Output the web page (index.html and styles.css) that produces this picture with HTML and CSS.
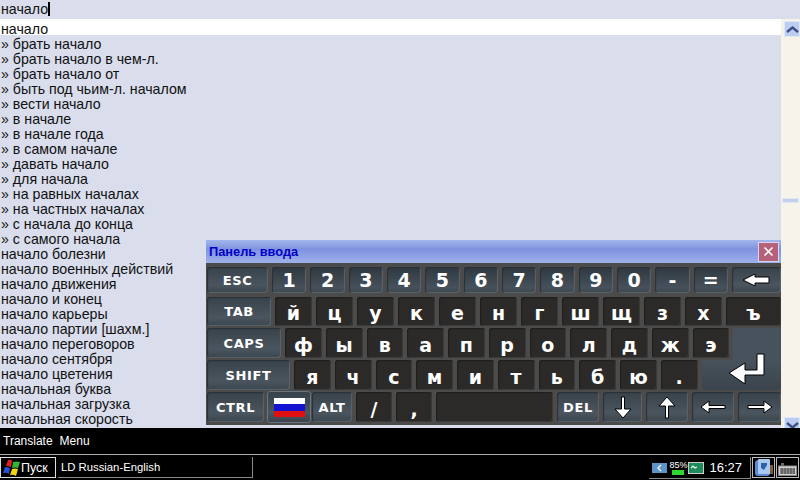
FILE: index.html
```html
<!DOCTYPE html>
<html lang="ru">

<head>
  <meta charset="UTF-8">
  <title>LD Russian-English</title>
  <link rel="stylesheet" href="styles.css">
</head>

<body>
  <div class="screen">
    <div class="search">начало<span class="caret"></span></div>

    <div class="results">
      <ul class="list">
        <li class="selected">начало</li>
        <li>» брать начало</li>
        <li>» брать начало в чем-л.</li>
        <li>» брать начало от</li>
        <li>» быть под чьим-л. началом</li>
        <li>» вести начало</li>
        <li>» в начале</li>
        <li>» в начале года</li>
        <li>» в самом начале</li>
        <li>» давать начало</li>
        <li>» для начала</li>
        <li>» на равных началах</li>
        <li>» на частных началах</li>
        <li>» с начала до конца</li>
        <li>» с самого начала</li>
        <li>начало болезни</li>
        <li>начало военных действий</li>
        <li>начало движения</li>
        <li>начало и конец</li>
        <li>начало карьеры</li>
        <li>начало партии [шахм.]</li>
        <li>начало переговоров</li>
        <li>начало сентября</li>
        <li>начало цветения</li>
        <li>начальная буква</li>
        <li>начальная загрузка</li>
        <li>начальная скорость</li>
      </ul>
      <div class="scrollbar">
        <div class="sb-btn sb-up">
          <svg width="13" height="7" viewBox="0 0 13 7"><path d="M1 6 L6.5 1.5 L12 6" fill="none" stroke="#3d4f86" stroke-width="2.4"/></svg>
        </div>
        <div class="sb-track"></div>
        <div class="sb-thumb"></div>
        <div class="sb-btn sb-down">
          <svg width="13" height="7" viewBox="0 0 13 7"><path d="M1 1 L6.5 5.5 L12 1" fill="none" stroke="#3d4f86" stroke-width="2.4"/></svg>
        </div>
      </div>
    </div>

    <div class="menubar">
      <span>Translate</span>
      <span>Menu</span>
    </div>

    <div class="taskbar">
      <div class="start">
        <svg width="19" height="18" viewBox="0 0 19 18">
          <path d="M6 1 Q9 0 10 2 L9 8 Q6 7 4 7 Z" fill="#e02020"/>
          <path d="M11 3 Q15 2 18 3 L16 9 Q13 8 10 9 Z" fill="#2fb52f"/>
          <path d="M3 8 Q6 8 8 9 L7 15 Q4 13 1 14 Z" fill="#2a4fd8"/>
          <path d="M10 10 Q13 9 16 10 L14 17 Q11 15 8 16 Z" fill="#f2d417"/>
        </svg>
        <span>Пуск</span>
      </div>
      <div class="task">LD Russian-English</div>
      <div class="tray">
        <span class="tray-net">
          <svg width="15" height="10" viewBox="0 0 15 10"><path d="M9 2 L6 5 L9 8" fill="none" stroke="#e6f0f8" stroke-width="1.5"/></svg>
        </span>
        <span class="tray-batt">
          <span class="batt-text">85%</span>
          <span class="batt-bar"></span>
        </span>
        <span class="tray-sig">
          <svg width="14" height="10" viewBox="0 0 14 10"><path d="M2 5 L4 3 L6 5 L8 4" fill="none" stroke="#e8fff0" stroke-width="1.2"/></svg>
        </span>
        <span class="clock">16:27</span>
      </div>
      <div class="quick">
        <svg width="20" height="20" viewBox="0 0 20 20">
          <rect x="1" y="2" width="15" height="16" rx="3" fill="#5a8ad6"/>
          <rect x="4" y="1" width="12" height="15" rx="1" fill="#a9c8f0"/>
          <path d="M7 5 L13 5 L13 7 L10 12 L7 10 Z" fill="#2f5fa8"/>
          <rect x="16" y="7" width="3" height="9" fill="#7d5b35"/>
        </svg>
      </div>
      <div class="quick quick-kb">
        <svg width="19" height="13" viewBox="0 0 19 13">
          <rect x="0.5" y="3" width="18" height="9.5" fill="#cfcfcf" stroke="#8a8a8a"/>
          <path d="M2 6 H17 M2 8 H17 M2 10 H17 M4 5 V11 M7 5 V11 M10 5 V11 M13 5 V11 M16 5 V11" stroke="#444" stroke-width="1"/>
          <rect x="3" y="0" width="3" height="3" fill="#666"/>
        </svg>
      </div>
    </div>

    <section class="kbd">
      <header class="kbd-title">
        <span>Панель ввода</span>
        <button class="kbd-close">
          <svg width="11" height="11" viewBox="0 0 11 11"><path d="M1.5 1.5 L9.5 9.5 M9.5 1.5 L1.5 9.5" stroke="#fff" stroke-width="1.6"/></svg>
        </button>
      </header>

      <div class="kbd-body">
        <div class="row r1">
          <div class="key fn w-esc">ESC</div>
          <div class="key fn num w-1">1</div>
          <div class="key fn num w-1">2</div>
          <div class="key fn num w-1">3</div>
          <div class="key fn num w-1">4</div>
          <div class="key fn num w-1">5</div>
          <div class="key fn num w-1">6</div>
          <div class="key fn num w-1">7</div>
          <div class="key fn num w-1">8</div>
          <div class="key fn num w-1">9</div>
          <div class="key fn num w-1">0</div>
          <div class="key fn num w-1">-</div>
          <div class="key fn num w-1">=</div>
          <div class="key fn grow">
            <svg width="28" height="14" viewBox="0 0 28 14"><path d="M1 7 L13 1 V4 H27 V10 H13 V13 Z" fill="#fff" stroke="#000" stroke-width="1"/></svg>
          </div>
        </div>

        <div class="row r2">
          <div class="key fn w-tab">TAB</div>
          <div class="key ltr">й</div>
          <div class="key ltr">ц</div>
          <div class="key ltr">у</div>
          <div class="key ltr">к</div>
          <div class="key ltr">е</div>
          <div class="key ltr">н</div>
          <div class="key ltr">г</div>
          <div class="key ltr">ш</div>
          <div class="key ltr">щ</div>
          <div class="key ltr">з</div>
          <div class="key ltr">х</div>
          <div class="key ltr grow">ъ</div>
        </div>

        <div class="row r3">
          <div class="key fn w-caps">CAPS</div>
          <div class="key ltr w-2">ф</div>
          <div class="key ltr w-2">ы</div>
          <div class="key ltr w-2">в</div>
          <div class="key ltr w-2">а</div>
          <div class="key ltr w-2">п</div>
          <div class="key ltr w-2">р</div>
          <div class="key ltr w-2">о</div>
          <div class="key ltr w-2">л</div>
          <div class="key ltr w-2">д</div>
          <div class="key ltr w-2">ж</div>
          <div class="key ltr w-2">э</div>
          <div class="key fn grow enter-top"></div>
        </div>

        <div class="row r4">
          <div class="key fn w-shift">SHIFT</div>
          <div class="key ltr w-2">я</div>
          <div class="key ltr w-2">ч</div>
          <div class="key ltr w-2">с</div>
          <div class="key ltr w-2">м</div>
          <div class="key ltr w-2">и</div>
          <div class="key ltr w-2">т</div>
          <div class="key ltr w-2">ь</div>
          <div class="key ltr w-2">б</div>
          <div class="key ltr w-2">ю</div>
          <div class="key ltr w-2">.</div>
          <div class="key fn grow enter-bot">
            <svg class="enter-icon" width="38" height="33" viewBox="0 0 38 33"><path d="M1 20 L17 10 V17 H29 V1 H36 V22 H17 V31 Z" fill="#fff" stroke="#000" stroke-width="1"/></svg>
          </div>
        </div>

        <div class="row r5">
          <div class="key fn w-ctrl">CTRL</div>
          <div class="key fn w-flag">
            <span class="flag"></span>
          </div>
          <div class="key fn w-alt">ALT</div>
          <div class="key ltr w-sym">/</div>
          <div class="key ltr w-sym">,</div>
          <div class="key ltr w-space"></div>
          <div class="key fn w-del">DEL</div>
          <div class="key fn w-arr">
            <svg width="20" height="23" viewBox="0 0 20 23"><path d="M8.5 1 H11.5 V13 H18 L10 22 L2 13 H8.5 Z" fill="#fff" stroke="#000"/></svg>
          </div>
          <div class="key fn w-arr2">
            <svg width="20" height="23" viewBox="0 0 20 23"><path d="M8.5 22 H11.5 V10 H18 L10 1 L2 10 H8.5 Z" fill="#fff" stroke="#000"/></svg>
          </div>
          <div class="key fn w-arr2">
            <svg width="26" height="14" viewBox="0 0 26 14"><path d="M1 7 L9 1 V5.5 H25 V8.5 H9 V13 Z" fill="#fff" stroke="#000"/></svg>
          </div>
          <div class="key fn grow">
            <svg width="26" height="14" viewBox="0 0 26 14"><path d="M25 7 L17 1 V5.5 H1 V8.5 H17 V13 Z" fill="#fff" stroke="#000"/></svg>
          </div>
        </div>
      </div>
    </section>
  </div>
</body>

</html>
```

FILE: styles.css
```css
* {
  box-sizing: border-box;
  margin: 0;
  padding: 0;
}

html,
body {
  width: 800px;
  height: 480px;
  overflow: hidden;
  background: #000;
}

.screen {
  position: relative;
  width: 800px;
  height: 480px;
  display: flex;
  flex-direction: column;
  font-family: "Liberation Sans", Arial, sans-serif;
  font-size: 14.2px;
  color: #111;
  background: #d9ddec;
}

/* search field */
.search {
  height: 19px;
  padding: 1px 0 0 1px;
  line-height: 16px;
  display: flex;
  align-items: flex-start;
  background: #d9ddec;
}

.caret {
  width: 2px;
  height: 14px;
  margin-top: 1px;
  background: #000;
}

/* word list */
.results {
  height: 409px;
  display: flex;
  overflow: hidden;
}

.list {
  flex: 1;
  list-style: none;
  overflow: hidden;
}

.list li {
  height: 15px;
  line-height: 15px;
  padding-left: 1px;
  white-space: nowrap;
}

.list li.selected {
  height: 16px;
  margin-bottom: 2px;
  line-height: 20px;
  background: #fff;
}

.scrollbar {
  position: relative;
  width: 19px;
  display: flex;
  flex-direction: column;
  background: #f5f3ea;
}

.sb-btn {
  flex: 0 0 16px;
  margin-left: 3px;
  display: flex;
  align-items: center;
  justify-content: center;
  background: #bccdf2;
  border: 1px solid #dfe7f8;
}

.sb-up {
  margin-top: 2px;
}

.sb-down {
  margin-bottom: -5px;
}

.sb-track {
  flex: 1;
}

.sb-thumb {
  position: absolute;
  top: 179px;
  left: 1px;
  width: 17px;
  height: 5px;
  background: #c3cfee;
  border: 1px solid #e2e6f3;
}

/* bottom bars */
.menubar {
  height: 27px;
  display: flex;
  gap: 7px;
  align-items: center;
  padding-left: 3px;
  color: #fff;
  font-size: 12px;
  background: #000;
  border-bottom: 1px solid #aaa;
}

.taskbar {
  height: 25px;
  display: flex;
  align-items: flex-start;
  padding-top: 2px;
  color: #fff;
  background: #000;
}

.start {
  width: 56px;
  height: 21px;
  display: flex;
  align-items: center;
  padding-left: 1px;
  font-size: 12.5px;
  border: 1px solid #ddd;
}

.task {
  width: 195px;
  height: 21px;
  margin-left: 2px;
  padding-left: 3px;
  line-height: 21px;
  font-size: 11.3px;
  border-right: 1px solid #888;
  border-bottom: 1px solid #888;
}

.tray {
  width: 102px;
  height: 22px;
  margin-left: auto;
  margin-right: 1px;
  padding-right: 8px;
  display: flex;
  align-items: center;
  justify-content: flex-end;
  border-right: 1px solid #888;
  border-bottom: 1px solid #888;
}

.tray-net {
  width: 15px;
  height: 10px;
  display: flex;
  background: #5e93c8;
}

.tray-batt {
  width: 18px;
  margin-left: 2px;
  display: flex;
  flex-direction: column;
  align-items: center;
  line-height: 9px;
}

.batt-text {
  font-size: 9px;
}

.batt-bar {
  width: 12px;
  height: 5px;
  background: #2fd62f;
}

.tray-sig {
  width: 16px;
  height: 12px;
  margin-left: 1px;
  display: flex;
  background: #1f8a5a;
  border: 1px solid #ccc;
}

.clock {
  margin-left: 5px;
  font-size: 13px;
}

.quick {
  width: 23px;
  height: 21px;
  margin-right: 1px;
  display: flex;
  align-items: center;
  justify-content: center;
  border: 1px solid #bbb;
}

.quick-kb {
  align-items: flex-end;
  padding-bottom: 1px;
}

/* on-screen keyboard window */
.kbd {
  position: absolute;
  left: 206px;
  top: 240px;
  width: 575px;
  height: 185px;
  display: flex;
  flex-direction: column;
  font-family: "DejaVu Sans", sans-serif;
  font-weight: bold;
  color: #fff;
  background: #4b4b4b;
}

.kbd-title {
  height: 23px;
  display: flex;
  align-items: center;
  justify-content: space-between;
  padding: 0 2px 0 3px;
  font-family: "Liberation Sans", sans-serif;
  font-weight: bold;
  font-size: 12.8px;
  color: #0000c8;
  background: linear-gradient(#a3b6ec, #7f92e0 40%, #9fb1ea);
}

.kbd-close {
  width: 21px;
  height: 20px;
  display: flex;
  align-items: center;
  justify-content: center;
  border: 1px solid #d8d8ec;
  background: #b5617c;
}

.kbd-body {
  flex: 1;
  display: flex;
  flex-direction: column;
  padding: 4px 0 3px 1px;
}

.row {
  display: flex;
  gap: 4px;
}

.r1 {
  height: 26px;
  margin-bottom: 4px;
}

.r2 {
  height: 29px;
  margin-bottom: 2px;
}

.r3,
.r4 {
  height: 30px;
  margin-bottom: 2px;
}

.r5 {
  height: 30px;
}

.key {
  display: flex;
  align-items: center;
  justify-content: center;
  border-radius: 3px;
}

.fn {
  font-size: 13px;
  letter-spacing: 0.6px;
  background: linear-gradient(#38424a, #4a555f 70%, #3b444c);
  box-shadow: inset 1px 1px 1px #2a3036, inset -1px -1px 1px #5a646c;
}

.num {
  font-size: 19px;
  letter-spacing: 0;
  background: linear-gradient(#2f3840, #46515b 80%, #3b444c);
}

.ltr {
  flex: 0 0 37px;
  padding-top: 3px;
  font-size: 19px;
  background: #2c2a28;
  box-shadow: inset 1px 1px 1px #1f1e1d, inset -1px -1px 1px #3d3c3a;
}

.grow {
  flex: 1;
}

.w-esc { flex: 0 0 61px; }
.w-1 { flex: 0 0 34.33px; }
.w-tab { flex: 0 0 64px; }
.w-caps { flex: 0 0 74px; }
.w-shift { flex: 0 0 83px; }
.w-2 { flex: 0 0 36.75px; }
.w-ctrl { flex: 0 0 57px; }
.w-flag { flex: 0 0 42px; box-shadow: 0 0 0 1px #6a747c; }
.w-alt { flex: 0 0 40px; margin-left: -2px; }
.w-sym { flex: 0 0 36px; }
.w-space { flex: 0 0 117px; }
.w-del { flex: 0 0 42px; }
.w-arr { flex: 0 0 39px; }
.w-arr2 { flex: 0 0 42px; }

.enter-top {
  margin-bottom: -2px;
  border-radius: 3px 3px 0 0;
  background: #47525c;
  box-shadow: none;
}

.enter-bot {
  position: relative;
  border-radius: 3px 0 3px 3px;
  background: linear-gradient(#47525c, #3b444c);
  box-shadow: none;
}

.enter-icon {
  position: absolute;
  right: 15px;
  top: -7px;
}

.flag {
  width: 31px;
  height: 19px;
  background: linear-gradient(#fff 33%, #1414d0 33%, #1414d0 66%, #e01010 66%);
}
```
